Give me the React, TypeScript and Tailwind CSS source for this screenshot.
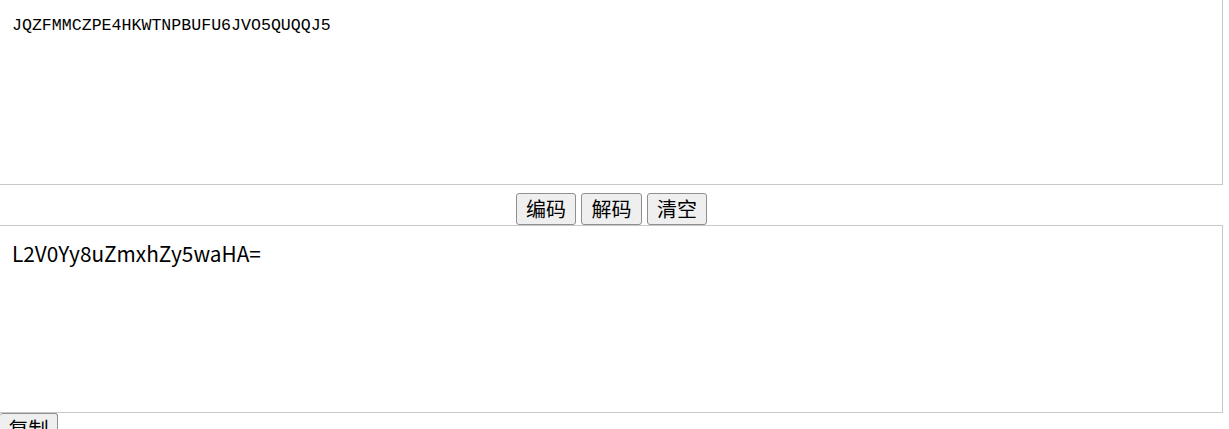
import React from "react";

const btn =
  "h-[32px] rounded-[3px] border border-[#8f8f8f] bg-[#efefef] text-[20px] leading-[28px] text-black font-['Noto_Sans_CJK_SC',sans-serif]";

export default function App() {
  return (
    <div className="w-[1223px] bg-white">
      <textarea
        readOnly
        value="JQZFMMCZPE4HKWTNPBUFU6JVO5QUQQJ5"
        className="block w-[1223px] h-[185px] resize-none border-r border-b border-[#c8c8c8] px-[12px] pt-[15px] text-[16.6px] leading-[22px] text-black outline-none font-['Liberation_Mono','Noto_Sans_CJK_SC',monospace]"
      />
      <div className="flex h-[40px] items-end justify-center gap-[5px]">
        <button className={`${btn} w-[60px]`}>编码</button>
        <button className={`${btn} w-[61px]`}>解码</button>
        <button className={`${btn} w-[60px]`}>清空</button>
      </div>
      <textarea
        readOnly
        value="L2V0Yy8uZmxhZy5waHA="
        className="block w-[1223px] h-[188px] resize-none border-t border-r border-b border-[#c8c8c8] px-[12px] pt-[13px] text-[20.8px] leading-[28px] text-black outline-none font-['Noto_Sans_CJK_SC','Open_Sans',sans-serif]"
      />
      <div className="flex">
        <button className={`${btn} w-[58px] border-l-0`}>复制</button>
      </div>
    </div>
  );
}
